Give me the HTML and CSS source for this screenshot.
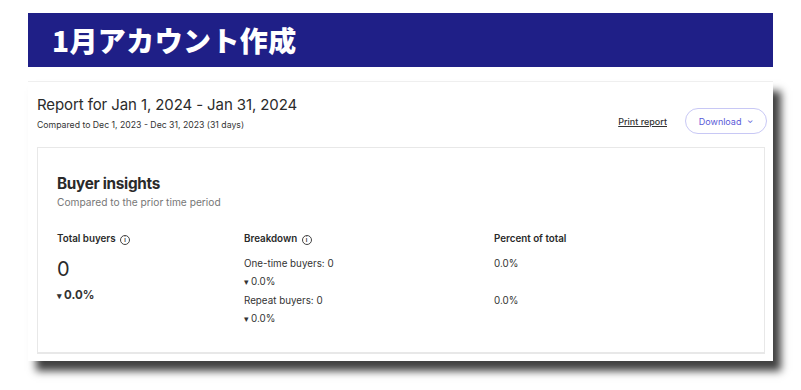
FILE: index.html
```html
<!DOCTYPE html>
<html lang="ja">
<head>
    <meta charset="UTF-8">
    <meta name="viewport" content="width=device-width, initial-scale=1.0">
    <title>1月アカウント作成</title>
    <link rel="stylesheet" href="styles.css">
</head>
<body>
    <div class="page">
        <h1 class="banner">1月アカウント作成</h1>
        <div class="shot">
            <div class="report-head">
                <div>
                    <h2 class="report-title">Report for Jan 1, 2024 - Jan 31, 2024</h2>
                    <p class="report-sub">Compared to Dec 1, 2023 - Dec 31, 2023 (31 days)</p>
                </div>
                <div class="actions">
                    <a class="print" href="#">Print report</a>
                    <button class="download">Download <span class="chev">&#8964;</span></button>
                </div>
            </div>
            <div class="insights">
                <h3 class="insights-title">Buyer insights</h3>
                <p class="insights-sub">Compared to the prior time period</p>
                <div class="cols">
                    <div class="col">
                        <div class="col-head">Total buyers <span class="info">i</span></div>
                        <div class="big">0</div>
                        <div class="change bold"><span class="tri">&#9662;</span>0.0%</div>
                    </div>
                    <div class="col">
                        <div class="col-head">Breakdown <span class="info">i</span></div>
                        <div class="line">One-time buyers: 0</div>
                        <div class="change"><span class="tri">&#9662;</span>0.0%</div>
                        <div class="line">Repeat buyers: 0</div>
                        <div class="change"><span class="tri">&#9662;</span>0.0%</div>
                    </div>
                    <div class="col">
                        <div class="col-head">Percent of total</div>
                        <div class="line">0.0%</div>
                        <div class="spacer"></div>
                        <div class="line">0.0%</div>
                    </div>
                </div>
            </div>
        </div>
    </div>
</body>
</html>
```

FILE: styles.css
```css
body {
    margin: 0;
    background: #fff;
    font-family: Inter, "Noto Sans", sans-serif;
    color: #2f2f2f;
}
.page {
    padding: 13px 28px 29px 28px;
    width: 745px;
}
.banner {
    margin: 0;
    height: 54px;
    background-color: #1f1f87;
    color: #fff;
    font-family: "Noto Sans CJK JP", sans-serif;
    font-weight: 900;
    font-size: 28px;
    line-height: 54px;
    padding-left: 24px;
    letter-spacing: 0.4px;
}
.shot {
    margin-top: 14px;
    height: 280px;
    box-sizing: border-box;
    background: #fff;
    border-top: 1px solid #efefef;
    padding: 12px 6px 0 9px;
    box-shadow: 8px 10px 8px rgba(0, 0, 0, 0.75);
}
.report-head {
    display: flex;
    justify-content: space-between;
    align-items: flex-start;
}
.report-title {
    margin: 0;
    font-size: 15px;
    font-weight: 400;
    line-height: 22px;
    color: #2b2b2b;
    letter-spacing: -0.1px;
}
.report-sub {
    margin: 3px 0 0 0;
    font-size: 8.7px;
    line-height: 12px;
    color: #333;
}
.actions {
    display: flex;
    align-items: center;
    gap: 18px;
    margin-top: 14px;
}
.print {
    font-size: 9px;
    color: #333;
    font-weight: 500;
    text-decoration: underline;
}
.download {
    width: 82px;
    height: 26px;
    border: 1px solid #c8c8f5;
    border-radius: 13px;
    background: #fff;
    color: #5a5ad8;
    font-family: Inter, sans-serif;
    font-size: 9px;
    padding: 0;
}
.chev {
    font-size: 8px;
    margin-left: 3px;
    position: relative;
    top: -2px;
}
.insights {
    margin-top: 13px;
    margin-right: 2px;
    height: 207px;
    box-sizing: border-box;
    border: 1px solid #e8e8e8;
    border-bottom-width: 2px;
    padding: 27px 20px 0 19px;
}
.insights-title {
    margin: 0;
    font-size: 15.3px;
    font-weight: 700;
    line-height: 18px;
    color: #2a2a2a;
    letter-spacing: -0.3px;
}
.insights-sub {
    margin: 3px 0 0 0;
    font-size: 10.2px;
    line-height: 13px;
    color: #777;
}
.cols {
    display: grid;
    grid-template-columns: 187px 250px 1fr;
    margin-top: 23px;
}
.col-head {
    font-size: 9.8px;
    font-weight: 600;
    line-height: 14px;
    color: #2a2a2a;
}
.info {
    display: inline-block;
    width: 8px;
    height: 8px;
    border: 1px solid #444;
    border-radius: 50%;
    font-size: 6px;
    line-height: 8px;
    text-align: center;
    vertical-align: 0;
    margin-left: 2px;
}
.big {
    font-size: 20px;
    line-height: 24px;
    margin-top: 11px;
    color: #2a2a2a;
}
.line {
    font-size: 9.8px;
    line-height: 14px;
    margin-top: 5px;
    color: #333;
}
.col-head + .line {
    margin-top: 11px;
}
.change {
    font-size: 9.8px;
    line-height: 14px;
    margin-top: 4px;
    color: #333;
}
.change.bold {
    font-size: 11.5px;
    font-weight: 700;
    margin-top: 7px;
}
.tri {
    font-size: 9px;
    margin-right: 2px;
}
.spacer {
    height: 14px;
    margin-top: 4px;
}
```
